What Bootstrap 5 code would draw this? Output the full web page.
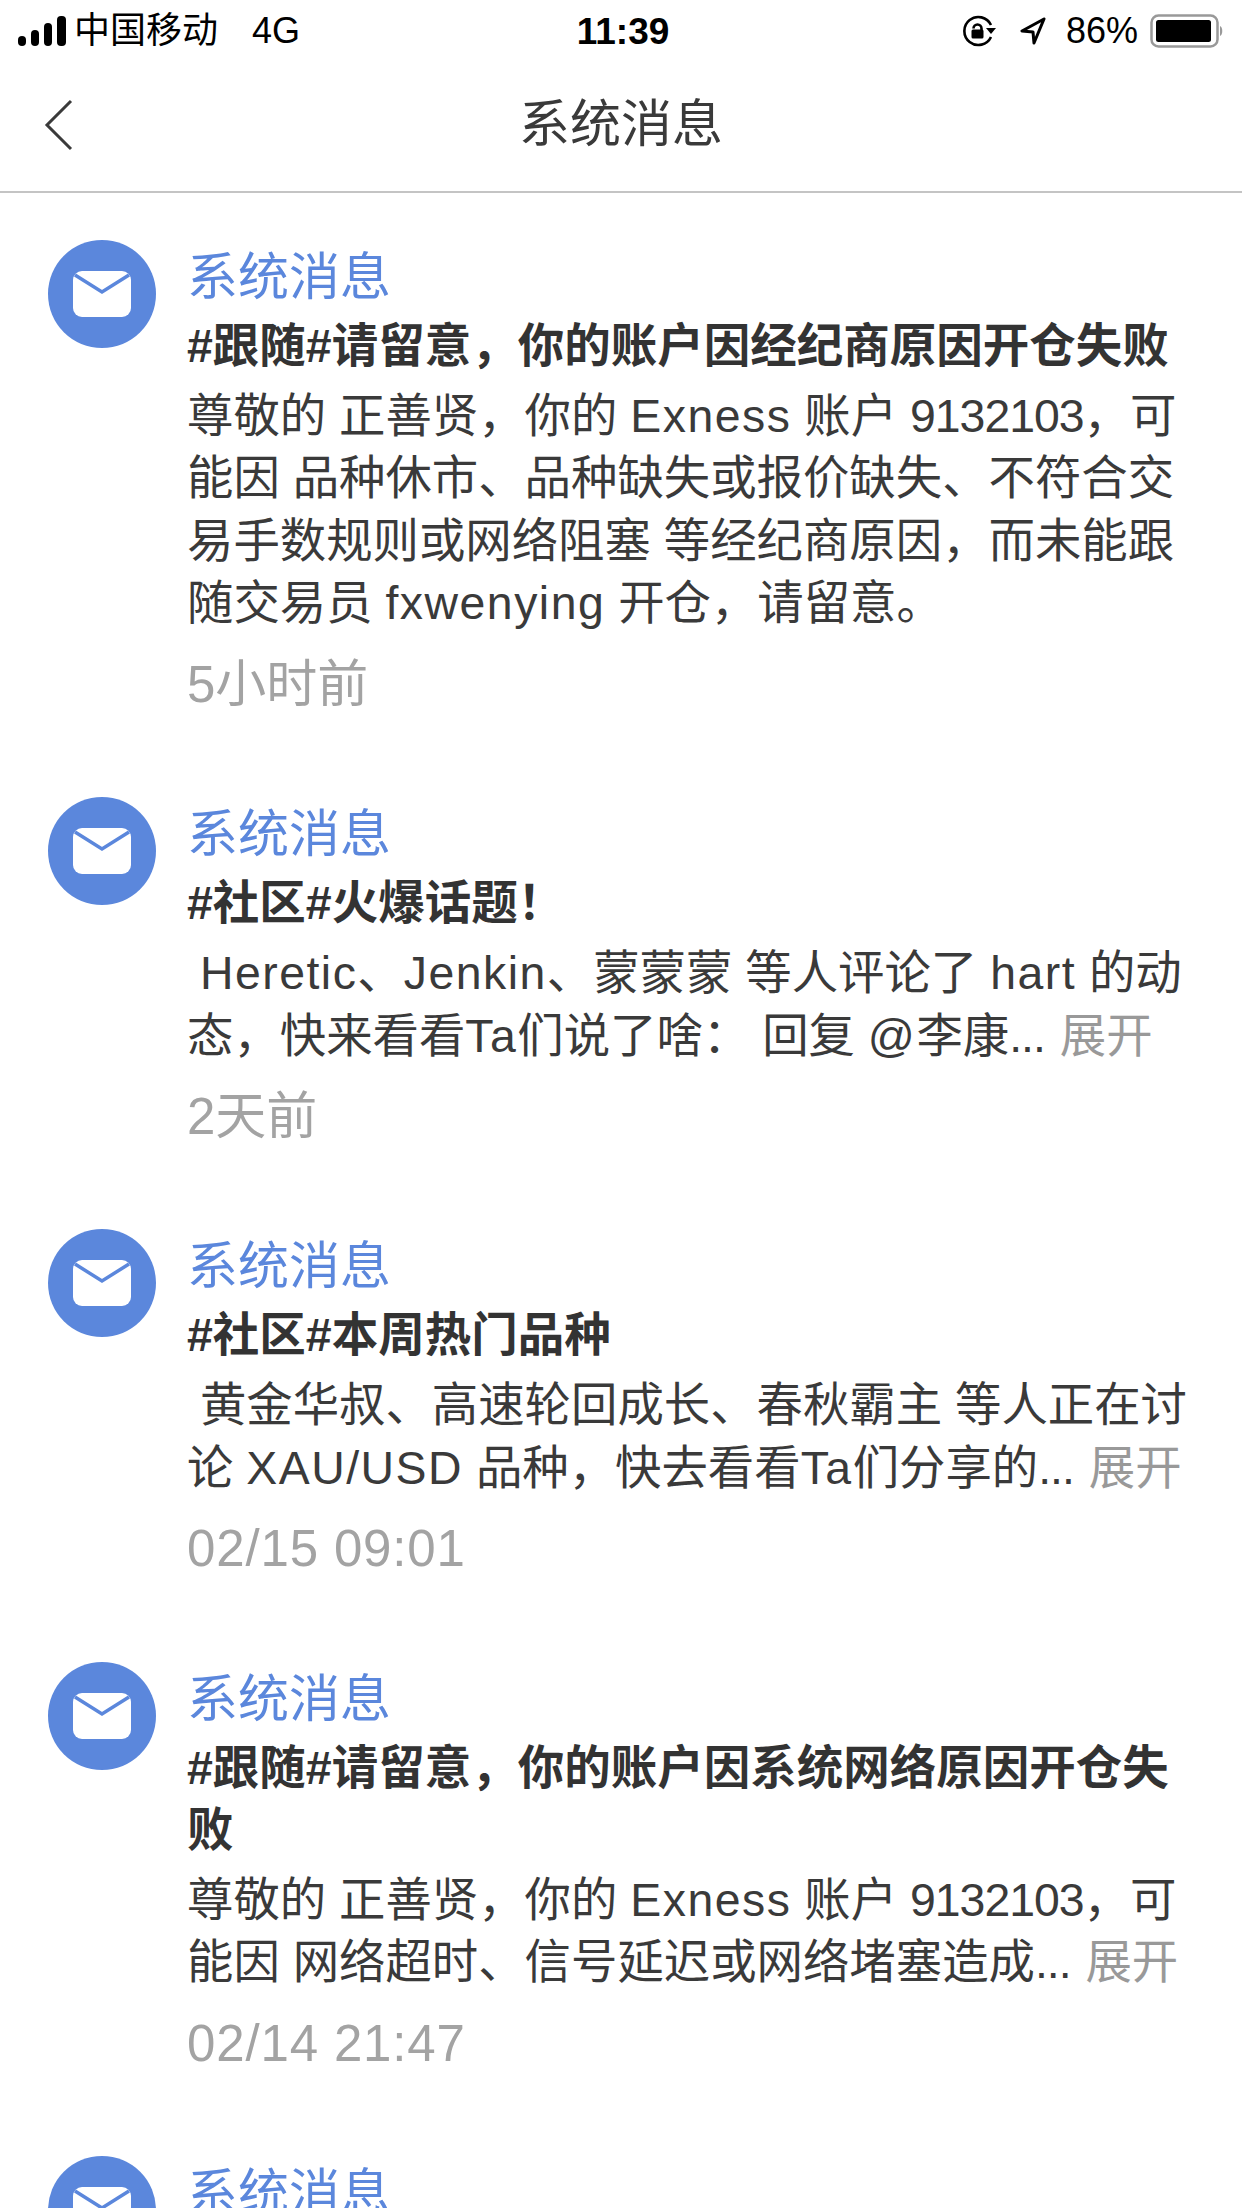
<!DOCTYPE html>
<html lang="zh-CN">
<head>
  <meta charset="UTF-8" />
  <meta name="viewport" content="width=device-width, initial-scale=1" />
  <title>系统消息</title>
  <link href="https://cdn.jsdelivr.net/npm/bootstrap@5.3.2/dist/css/bootstrap.min.css" rel="stylesheet" />
  <style>
    html, body {
      height: 2208px;
      overflow: hidden;
    }
    body {
      background: #fff;
      color: #333;
      font-family: "Liberation Sans", "Noto Sans CJK SC", sans-serif;
    }
    .status-bar {
      height: 60px;
      padding: 2px 18px 0;
      color: #000;
      font-size: 36px;
      line-height: 1;
    }
    .status-left, .status-right {
      width: 480px;
    }
    .status-net {
      margin-left: 26px;
    }
    .status-time {
      font-weight: 700;
      font-size: 37px;
      margin-left: 4px;
    }
    .status-batt {
      margin-right: -4px;
    }
    .nav-bar {
      height: 133px;
      border-bottom: 2px solid #c4c4c4;
    }
    .nav-back {
      left: 44px;
      top: 39px;
    }
    .nav-title {
      font-size: 51px;
      color: #3a3a3a;
    }
    .msg-list {
      padding: 47px 48px 0;
      gap: 81.5px;
    }
    .msg-item {
      gap: 31px;
    }
    .msg-avatar {
      width: 108px;
      height: 108px;
      background: #5b87dc;
      flex: none;
    }
    .msg-text {
      min-width: 0;
      padding-top: 7px;
      white-space: nowrap;
    }
    .msg-from {
      color: #5b87dc;
      font-size: 51px;
      line-height: 62px;
    }
    .msg-subject {
      font-size: 46.5px;
      line-height: 62px;
      margin-top: 6px;
      font-weight: 700;
    }
    .msg-body {
      font-size: 46.4px;
      line-height: 62.4px;
      margin-top: 8px;
      color: #3a3a3a;
    }
    .lat {
      letter-spacing: 1.5px;
    }
    .num {
      letter-spacing: -1px;
    }
    .msg-dots {
      letter-spacing: -1px;
    }
    .msg-more {
      color: #999;
      margin-left: 2px;
    }
    .msg-time {
      font-size: 51px;
      line-height: 62px;
      color: #a3a3a3;
      margin-top: 19px;
    }
    .stamp {
      letter-spacing: .85px;
    }
  </style>
</head>
<body>
  <div class="status-bar d-flex align-items-center justify-content-between">
    <div class="status-left d-flex align-items-center gap-2">
      <svg width="48" height="30" viewBox="0 0 48 30"><rect x="0" y="20" width="8" height="10" rx="4"/><rect x="13" y="14" width="8" height="16" rx="4"/><rect x="26" y="7" width="8" height="23" rx="4"/><rect x="39" y="0" width="9" height="30" rx="4"/></svg>
      <span>中国移动</span>
      <span class="status-net">4G</span>
    </div>
    <div class="status-time">11:39</div>
    <div class="status-right d-flex align-items-center justify-content-end gap-3">
      <svg width="34" height="32" viewBox="0 0 34 32" fill="none" stroke="#000" stroke-width="2.6"><path d="M29 22a14 14 0 1 1 0-12"/><path d="M24 13l5 6 5-6z" fill="#000" stroke="none"/><path d="M11.500 13.500a4 4 0 0 1 8 0v2"/><rect x="9.500" y="14.500" width="12" height="9" rx="1.500" fill="#000" stroke="none"/></svg>
      <svg class="ms-2 me-1" width="26" height="28" viewBox="0 0 26 28" fill="none" stroke="#000" stroke-width="3" stroke-linejoin="round"><path d="M24 2L2 14l11 1 1 11z"/></svg>
      <span class="status-batt">86%</span>
      <svg width="74" height="34" viewBox="0 0 74 34"><rect x="1.500" y="1.500" width="66" height="31" rx="7" fill="none" stroke="#999" stroke-width="2.500"/><rect x="6" y="6" width="55" height="22" rx="2.500"/><path d="M70 12c3 1 3 9 0 10z" fill="#999"/></svg>
    </div>
  </div>

  <div class="nav-bar position-relative d-flex align-items-center justify-content-center">
    <svg class="nav-back position-absolute" width="30" height="52" viewBox="0 0 30 52" fill="none" stroke="#3a3a3a" stroke-width="3"><path d="M27 2L3 26l24 24"/></svg>
    <div class="nav-title">系统消息</div>
  </div>

  <div class="msg-list d-flex flex-column">
    <div class="msg-item d-flex">
      <div class="msg-avatar rounded-circle d-flex align-items-center justify-content-center">
        <svg width="58" height="46" viewBox="0 0 58 46"><rect width="58" height="46" rx="9" fill="#fff"/><path d="M2 4l27 17L56 4" fill="none" stroke="#5b87dc" stroke-width="3.500"/></svg>
      </div>
      <div class="msg-text">
        <div class="msg-from">系统消息</div>
        <div class="msg-subject">#跟随#请留意，你的账户因经纪商原因开仓失败</div>
        <div class="msg-body">尊敬的 正善贤，你的 <span class="lat">Exness</span> 账户 <span class="num">9132103</span>，可<br>能因 品种休市、品种缺失或报价缺失、不符合交<br>易手数规则或网络阻塞 等经纪商原因，而未能跟<br>随交易员 <span class="lat">fxwenying</span> 开仓，请留意。</div>
        <div class="msg-time">5小时前</div>
      </div>
    </div>

    <div class="msg-item d-flex">
      <div class="msg-avatar rounded-circle d-flex align-items-center justify-content-center">
        <svg width="58" height="46" viewBox="0 0 58 46"><rect width="58" height="46" rx="9" fill="#fff"/><path d="M2 4l27 17L56 4" fill="none" stroke="#5b87dc" stroke-width="3.500"/></svg>
      </div>
      <div class="msg-text">
        <div class="msg-from">系统消息</div>
        <div class="msg-subject">#社区#火爆话题！</div>
        <div class="msg-body">&nbsp;<span class="lat">Heretic</span>、<span class="lat">Jenkin</span>、蒙蒙蒙 等人评论了 <span class="lat">hart</span> 的动<br>态，快来看看<span class="lat">Ta</span>们说了啥： 回复 <span class="lat">@</span>李康<span class="msg-dots">...</span> <span class="msg-more">展开</span></div>
        <div class="msg-time">2天前</div>
      </div>
    </div>

    <div class="msg-item d-flex">
      <div class="msg-avatar rounded-circle d-flex align-items-center justify-content-center">
        <svg width="58" height="46" viewBox="0 0 58 46"><rect width="58" height="46" rx="9" fill="#fff"/><path d="M2 4l27 17L56 4" fill="none" stroke="#5b87dc" stroke-width="3.500"/></svg>
      </div>
      <div class="msg-text">
        <div class="msg-from">系统消息</div>
        <div class="msg-subject">#社区#本周热门品种</div>
        <div class="msg-body">&nbsp;黄金华叔、高速轮回成长、春秋霸主 等人正在讨<br>论 <span class="lat">XAU/USD</span> 品种，快去看看<span class="lat">Ta</span>们分享的<span class="msg-dots">...</span> <span class="msg-more">展开</span></div>
        <div class="msg-time"><span class="stamp">02/15 09:01</span></div>
      </div>
    </div>

    <div class="msg-item d-flex">
      <div class="msg-avatar rounded-circle d-flex align-items-center justify-content-center">
        <svg width="58" height="46" viewBox="0 0 58 46"><rect width="58" height="46" rx="9" fill="#fff"/><path d="M2 4l27 17L56 4" fill="none" stroke="#5b87dc" stroke-width="3.500"/></svg>
      </div>
      <div class="msg-text">
        <div class="msg-from">系统消息</div>
        <div class="msg-subject">#跟随#请留意，你的账户因系统网络原因开仓失<br>败</div>
        <div class="msg-body">尊敬的 正善贤，你的 <span class="lat">Exness</span> 账户 <span class="num">9132103</span>，可<br>能因 网络超时、信号延迟或网络堵塞造成<span class="msg-dots">...</span> <span class="msg-more">展开</span></div>
        <div class="msg-time"><span class="stamp">02/14 21:47</span></div>
      </div>
    </div>

    <div class="msg-item d-flex">
      <div class="msg-avatar rounded-circle d-flex align-items-center justify-content-center">
        <svg width="58" height="46" viewBox="0 0 58 46"><rect width="58" height="46" rx="9" fill="#fff"/><path d="M2 4l27 17L56 4" fill="none" stroke="#5b87dc" stroke-width="3.500"/></svg>
      </div>
      <div class="msg-text">
        <div class="msg-from">系统消息</div>
      </div>
    </div>
  </div>

  <script src="https://cdn.jsdelivr.net/npm/bootstrap@5.3.2/dist/js/bootstrap.bundle.min.js"></script>
</body>
</html>
